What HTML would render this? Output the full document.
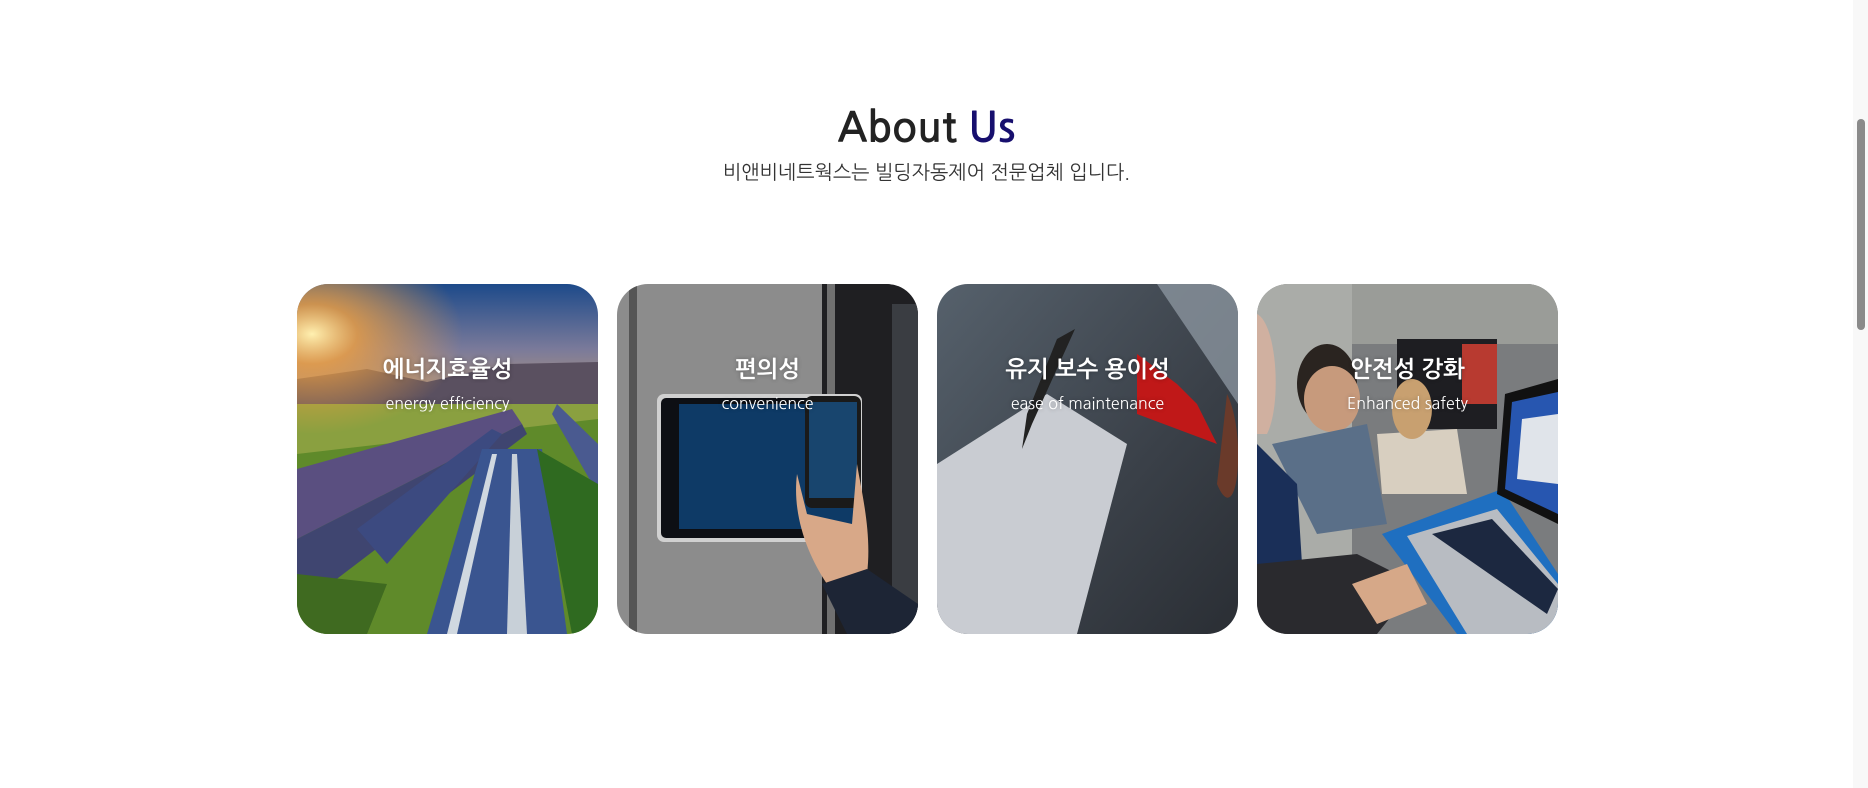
<!DOCTYPE html>
<html><head><meta charset="utf-8"><style>
html,body{margin:0;padding:0;background:#fff;width:1868px;height:788px;overflow:hidden;font-family:"Liberation Sans","NanumGothic",sans-serif;}
.title{position:absolute;left:0;width:1853px;top:99px;text-align:center;font-size:41px;font-weight:700;color:#222;font-family:"NanumGothic","Noto Sans CJK KR",sans-serif;line-height:60px}
.title span{color:#170f6e}
.sub{position:absolute;left:0;width:1853px;top:157px;text-align:center;font-size:19.5px;color:#333;font-family:"NanumGothic","Noto Sans CJK KR",sans-serif;line-height:30px}
.card{position:absolute;top:284px;width:301px;height:350px;border-radius:31px;overflow:hidden}
.card svg{position:absolute;left:0;top:0}
.t{position:absolute;left:0;width:100%;text-align:center;color:#fff;font-weight:700;font-size:23px;font-family:"NanumGothic","Noto Sans CJK KR",sans-serif;line-height:34px;text-shadow:0 0 4px rgba(0,0,0,.3);z-index:2}
.t2{position:absolute;left:0;width:100%;text-align:center;color:#fff;font-size:16px;font-family:"NanumGothic","Noto Sans CJK KR",sans-serif;line-height:24px;text-shadow:0 0 4px rgba(0,0,0,.3);z-index:2}
.sb{position:absolute;left:1853px;top:0;width:15px;height:788px;background:#f8f8f8}
.th{position:absolute;left:1857px;top:119px;width:8px;height:211px;border-radius:4px;background:#8a8a8a}
</style></head><body>
<div class="title">About <span>Us</span></div>
<div class="sub">비앤비네트웍스는 빌딩자동제어 전문업체 입니다.</div>

<div class="card" style="left:297px">
<svg width="301" height="350" viewBox="0 0 301 350">
<defs>
<linearGradient id="sky" x1="0" y1="0" x2="0" y2="1"><stop offset="0" stop-color="#1d4a8a"/><stop offset=".5" stop-color="#7a7a9a"/><stop offset="1" stop-color="#c9a070"/></linearGradient>
<radialGradient id="sun" cx="0.05" cy="0.25" r="0.5"><stop offset="0" stop-color="#fff0b0"/><stop offset=".3" stop-color="#f0a040" stop-opacity=".8"/><stop offset="1" stop-color="#f0a040" stop-opacity="0"/></radialGradient>
</defs>
<rect width="301" height="130" fill="url(#sky)"/>
<path d="M0 95 L70 85 L130 98 L210 80 L301 78 L301 125 L0 125Z" fill="#5a5060"/>
<rect y="120" width="301" height="230" fill="#5f8a2a"/>
<path d="M0 120 L301 120 L301 135 L0 170Z" fill="#8aa040"/>
<rect width="301" height="200" fill="url(#sun)"/>
<path d="M0 185 L215 125 L225 140 L0 255Z" fill="#5a4f80"/>
<path d="M0 255 L225 140 L230 150 L20 310 L0 315Z" fill="#3f4570"/>
<path d="M60 245 L195 145 L205 150 L90 280Z" fill="#3c4a80"/>
<path d="M130 350 L185 165 L245 165 L270 350Z" fill="#3a5590"/>
<path d="M150 350 L195 170 L200 170 L160 350Z" fill="#d0d8e0"/>
<path d="M210 350 L215 170 L220 170 L230 350Z" fill="#c8d0d8"/>
<path d="M260 120 L301 160 L301 210 L255 130Z" fill="#4a5a90"/>
<path d="M240 165 L301 200 L301 350 L275 350Z" fill="#2f6a20"/>
<path d="M0 290 L90 300 L70 350 L0 350Z" fill="#3f6a20"/>
</svg>
<div class="t" style="top:69px">에너지효율성</div><div class="t2" style="top:108px">energy efficiency</div>
</div>

<div class="card" style="left:617px">
<svg width="301" height="350" viewBox="0 0 301 350">
<rect width="301" height="350" fill="#8c8c8c"/>
<rect x="12" width="8" height="350" fill="#555"/>
<rect x="205" width="96" height="350" fill="#1f1f22"/>
<rect x="210" y="0" width="8" height="350" fill="#707070"/>
<rect x="275" y="20" width="26" height="330" fill="#3a3d42"/>
<rect x="40" y="110" width="205" height="148" rx="7" fill="#d0d0d0"/>
<rect x="44" y="114" width="197" height="140" rx="5" fill="#0d0f14"/>
<rect x="62" y="120" width="176" height="125" fill="#0e3a66"/>
<rect x="188" y="112" width="56" height="112" rx="7" fill="#1a1a1a"/>
<rect x="192" y="118" width="48" height="96" fill="#18456e"/>
<path d="M180 190 C175 230 190 270 210 300 L250 290 C255 250 245 210 240 180 L235 240 L190 230Z" fill="#d8a888"/>
<path d="M205 300 L250 285 L301 320 L301 350 L230 350Z" fill="#1d2535"/>
</svg>
<div class="t" style="top:69px">편의성</div><div class="t2" style="top:108px">convenience</div>
</div>

<div class="card" style="left:937px">
<svg width="301" height="350" viewBox="0 0 301 350">
<defs><linearGradient id="g3" x1="0" y1="0" x2="1" y2="1"><stop offset="0" stop-color="#56616c"/><stop offset=".6" stop-color="#3a4048"/><stop offset="1" stop-color="#2a2e34"/></linearGradient></defs>
<rect width="301" height="350" fill="url(#g3)"/>
<path d="M220 0 L301 0 L301 120Z" fill="#8a939e" opacity=".8"/>
<path d="M0 180 L110 110 L190 160 L140 350 L0 350Z" fill="#c9ccd2"/>
<path d="M200 130 L280 160 L260 120 L240 100 L200 70Z" fill="#c01818"/>
<path d="M120 55 L138 45 L95 140 L85 165 L90 130Z" fill="#222"/>
<path d="M290 110 C310 150 301 250 280 200Z" fill="#6a3a2a"/>
</svg>
<div class="t" style="top:69px">유지 보수 용이성</div><div class="t2" style="top:108px">ease of maintenance</div>
</div>

<div class="card" style="left:1257px">
<svg width="301" height="350" viewBox="0 0 301 350">
<rect width="301" height="350" fill="#7a7c7e"/>
<rect width="95" height="280" fill="#aaaca8"/>
<rect x="95" width="206" height="60" fill="#9a9c98"/>
<rect x="140" y="55" width="100" height="90" fill="#1e1e22"/>
<rect x="205" y="60" width="35" height="60" fill="#b83a30"/>
<ellipse cx="70" cy="100" rx="30" ry="40" fill="#2a2420"/>
<ellipse cx="75" cy="115" rx="28" ry="33" fill="#c79a7c"/>
<path d="M15 160 L110 140 L130 240 L60 250Z" fill="#5a6f88"/>
<path d="M120 150 L200 145 L210 210 L125 210Z" fill="#d8cfc0"/>
<ellipse cx="155" cy="125" rx="20" ry="30" fill="#c8a070"/>
<path d="M0 160 L40 200 L45 280 L0 290Z" fill="#1a2f58"/>
<path d="M0 30 C20 40 25 120 10 150 L0 150Z" fill="#d0b0a0"/>
<path d="M0 280 L100 270 L160 300 L120 350 L0 350Z" fill="#2a2a2e"/>
<path d="M125 250 L245 205 L301 290 L301 350 L200 350Z" fill="#1f6fc0"/>
<path d="M150 252 L240 225 L301 300 L301 350 L210 350Z" fill="#b8bcc2"/>
<path d="M175 250 L235 235 L301 305 L290 330Z" fill="#1c2840"/>
<path d="M248 110 L301 95 L301 240 L240 210Z" fill="#111"/>
<path d="M255 118 L301 108 L301 230 L248 205Z" fill="#2756b0"/>
<path d="M265 135 L301 130 L301 200 L260 195Z" fill="#e0e4ea"/>
<path d="M95 300 L150 280 L170 320 L120 340Z" fill="#d6a888"/>
</svg>
<div class="t" style="top:69px">안전성 강화</div><div class="t2" style="top:108px">Enhanced safety</div>
</div>

<div class="sb"></div><div class="th"></div>
</body></html>
